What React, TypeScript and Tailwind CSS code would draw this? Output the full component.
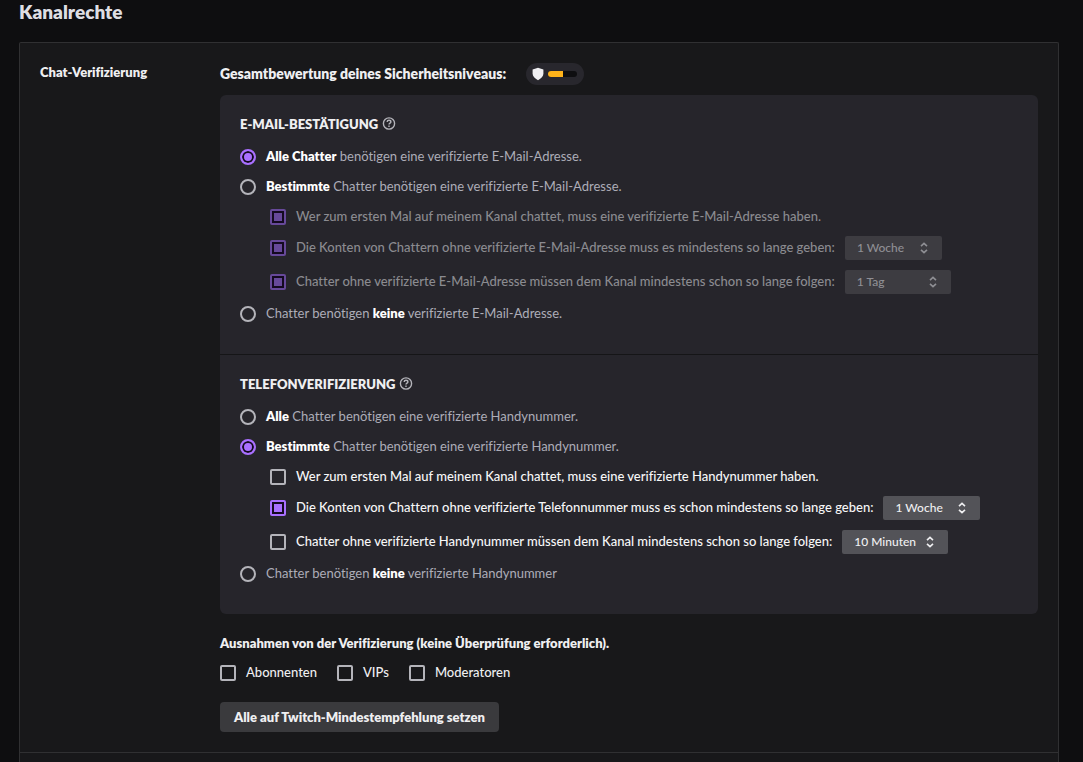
import type { ReactNode } from "react";

const radioClass =
  "size-4 shrink-0 appearance-none rounded-full border-2 border-[#b4b4ba] bg-transparent checked:border-[#a970ff] checked:bg-[#a970ff] checked:shadow-[inset_0_0_0_2px_#140a20]";

const checkboxClass =
  "size-4 shrink-0 appearance-none rounded-xs border-2 border-[#b4b4ba] bg-transparent checked:border-[#a970ff] checked:bg-[#a970ff] checked:shadow-[inset_0_0_0_2px_#140a20] disabled:checked:border-[#67499a] disabled:checked:bg-[#67499a]";

function HelpIcon() {
  return (
    <svg viewBox="0 0 14 14" className="size-3.5" fill="none" stroke="#b4b4ba" strokeWidth="1.4" aria-hidden="true">
      <circle cx="7" cy="6.5" r="5.6" />
      <path d="M5.1 5C5.2 3.9 6 3.3 7 3.3s1.9.6 1.9 1.6c0 1.3-1.9 1.3-1.9 2.6" />
      <path d="M7 8.6v1.5" />
    </svg>
  );
}

function Section({ title, children }: { title: string; children: ReactNode }) {
  return (
    <section className="px-5 pt-[19px] pb-6.5">
      <div className="mb-2 flex h-5 items-center gap-1">
        <h3 className="text-[13px] leading-5 font-extrabold text-[#efeff1]">{title}</h3>
        <button type="button" aria-label="Hilfe">
          <HelpIcon />
        </button>
      </div>
      {children}
    </section>
  );
}

function Radio({
  id,
  name,
  checked,
  last,
  children,
}: {
  id: string;
  name: string;
  checked?: boolean;
  last?: boolean;
  children: ReactNode;
}) {
  return (
    <div className={`flex items-center gap-2.5 ${last ? "h-7" : "h-7.5"}`}>
      <input id={id} type="radio" name={name} defaultChecked={checked} className={radioClass} />
      <label htmlFor={id} className="pb-0.5 text-[#adadb8]">
        {children}
      </label>
    </div>
  );
}

function Strong({ children }: { children: ReactNode }) {
  return <strong className="font-extrabold text-white">{children}</strong>;
}

function Check({
  id,
  label,
  checked,
  disabled,
  height,
  children,
}: {
  id: string;
  label: string;
  checked?: boolean;
  disabled?: boolean;
  height: string;
  children?: ReactNode;
}) {
  return (
    <div className={`ml-7.5 flex items-center gap-2.5 ${height}`}>
      <input
        id={id}
        type="checkbox"
        defaultChecked={checked}
        disabled={disabled}
        className={checkboxClass}
      />
      <label htmlFor={id} className={`pb-0.5 font-medium ${disabled ? "text-[#8b8b90]" : "text-[#f7f7f8]"}`}>
        {label}
      </label>
      {children}
    </div>
  );
}

function Duration({
  label,
  value,
  disabled,
  width,
}: {
  label: string;
  value: string;
  disabled?: boolean;
  width: string;
}) {
  return (
    <div className={`relative shrink-0 ${width}`}>
      <select
        aria-label={label}
        disabled={disabled}
        defaultValue={value}
        className="block h-6 w-full appearance-none rounded-xs bg-[#535358] px-3 text-xs leading-6 font-medium text-[#efeff1] opacity-100 disabled:bg-[#3d3c41] disabled:text-[#8f8f94]"
      >
        <option>{value}</option>
      </select>
      <svg
        viewBox="0 0 8 12"
        className={`pointer-events-none absolute top-1.5 right-3.5 h-3 w-2 ${disabled ? "text-[#8f8f94]" : "text-[#efeff1]"}`}
        fill="none"
        stroke="currentColor"
        strokeWidth="1.6"
        aria-hidden="true"
      >
        <path d="M1 4.2 4 1.4l3 2.8M1 7.8l3 2.8 3-2.8" />
      </svg>
    </div>
  );
}

function Exemption({ id, label }: { id: string; label: string }) {
  return (
    <div className="flex items-center gap-2.5">
      <input id={id} type="checkbox" className={checkboxClass} />
      <label htmlFor={id} className="pb-0.5 font-medium text-[#efeff1]">
        {label}
      </label>
    </div>
  );
}

export default function App() {
  return (
    <main className="flex min-h-screen flex-col bg-[#0e0e10] pr-6 pl-[19px] font-['Lato','Noto_Sans',sans-serif] text-[13px] leading-5 text-[#efeff1] [font-variant-ligatures:none]">
      <h1 className="mb-[18px] h-6 text-[19px] leading-6 font-extrabold text-[#dedee3]">Kanalrechte</h1>
      <div className="flex flex-1 flex-col rounded-t-xs border border-b-0 border-[#303032] bg-[#18181a]">
        <div className="flex border-b border-[#303032] p-5">
          <h2 className="w-45 shrink-0 text-[13px] leading-[18px] font-extrabold">Chat-Verifizierung</h2>
          <div className="min-w-0 flex-1">
            <div className="mb-2.5 flex h-[22px] items-center gap-5">
              <span className="text-sm font-extrabold">Gesamtbewertung deines Sicherheitsniveaus:</span>
              <span className="flex h-[22px] w-[58px] items-center gap-1 rounded-full bg-[#28272d] pl-1.5">
                <svg viewBox="0 0 12 14" className="h-3.5 w-3" fill="#efeff1" aria-hidden="true">
                  <path d="M6 .8 11.4 2.4v4.2c0 3-2.2 5-5.4 6.7C2.8 11.6.6 9.6.6 6.6V2.4Z" />
                </svg>
                <span className="flex h-1.5 w-[29px] overflow-hidden rounded-full bg-[#0e0e10]">
                  <span className="w-[15px] bg-[#ffb31a]" />
                </span>
              </span>
            </div>

            <div className="divide-y divide-[#151517] rounded-md bg-[#26252b]">
              <Section title="E-MAIL-BESTÄTIGUNG">
                <Radio id="mail-all" name="mail" checked>
                  <Strong>Alle Chatter</Strong> benötigen eine verifizierte E-Mail-Adresse.
                </Radio>
                <Radio id="mail-some" name="mail">
                  <Strong>Bestimmte</Strong> Chatter benötigen eine verifizierte E-Mail-Adresse.
                </Radio>
                <Check
                  id="mail-first"
                  checked
                  disabled
                  height="h-7.5"
                  label="Wer zum ersten Mal auf meinem Kanal chattet, muss eine verifizierte E-Mail-Adresse haben."
                />
                <Check
                  id="mail-age"
                  checked
                  disabled
                  height="h-8"
                  label="Die Konten von Chattern ohne verifizierte E-Mail-Adresse muss es mindestens so lange geben:"
                >
                  <Duration label="Kontoalter" value="1 Woche" disabled width="w-[97px]" />
                </Check>
                <Check
                  id="mail-follow"
                  checked
                  disabled
                  height="h-9"
                  label="Chatter ohne verifizierte E-Mail-Adresse müssen dem Kanal mindestens schon so lange folgen:"
                >
                  <Duration label="Followdauer" value="1 Tag" disabled width="w-[106px]" />
                </Check>
                <Radio id="mail-none" name="mail" last>
                  Chatter benötigen <Strong>keine</Strong> verifizierte E-Mail-Adresse.
                </Radio>
              </Section>

              <Section title="TELEFONVERIFIZIERUNG">
                <Radio id="phone-all" name="phone">
                  <Strong>Alle</Strong> Chatter benötigen eine verifizierte Handynummer.
                </Radio>
                <Radio id="phone-some" name="phone" checked>
                  <Strong>Bestimmte</Strong> Chatter benötigen eine verifizierte Handynummer.
                </Radio>
                <Check
                  id="phone-first"
                  height="h-7.5"
                  label="Wer zum ersten Mal auf meinem Kanal chattet, muss eine verifizierte Handynummer haben."
                />
                <Check
                  id="phone-age"
                  checked
                  height="h-8"
                  label="Die Konten von Chattern ohne verifizierte Telefonnummer muss es schon mindestens so lange geben:"
                >
                  <Duration label="Kontoalter" value="1 Woche" width="w-[97px]" />
                </Check>
                <Check
                  id="phone-follow"
                  height="h-9"
                  label="Chatter ohne verifizierte Handynummer müssen dem Kanal mindestens schon so lange folgen:"
                >
                  <Duration label="Followdauer" value="10 Minuten" width="w-[106px]" />
                </Check>
                <Radio id="phone-none" name="phone" last>
                  Chatter benötigen <Strong>keine</Strong> verifizierte Handynummer
                </Radio>
              </Section>
            </div>

            <h3 className="mt-[19px] mb-2.5 text-[13px] leading-5 font-extrabold">
              Ausnahmen von der Verifizierung (keine Überprüfung erforderlich).
            </h3>
            <div className="mb-[19px] flex h-5 items-center gap-5">
              <Exemption id="ex-subs" label="Abonnenten" />
              <Exemption id="ex-vips" label="VIPs" />
              <Exemption id="ex-mods" label="Moderatoren" />
            </div>
            <button type="button" className="block h-7.5 rounded-sm bg-[#3a3a3d] px-3.5 text-[13px] font-extrabold">
              Alle auf Twitch-Mindestempfehlung setzen
            </button>
          </div>
        </div>
      </div>
    </main>
  );
}
